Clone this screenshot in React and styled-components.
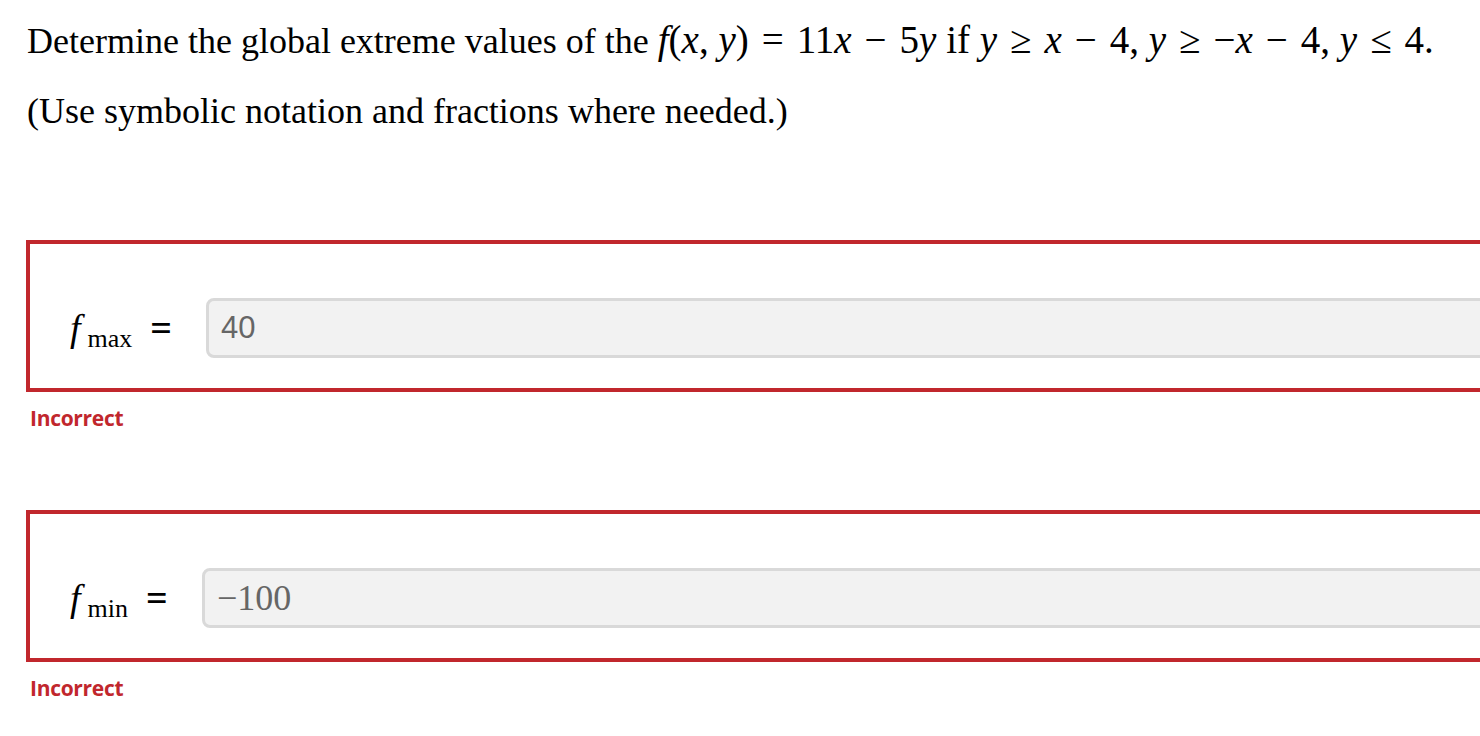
import React from "react";
import styled, { createGlobalStyle } from "styled-components";

const GlobalStyle = createGlobalStyle`
  html, body {
    margin: 0;
    padding: 0;
    background: #ffffff;
    overflow: hidden;
  }
`;

const Page = styled.div`
  width: 1560px;
  padding: 17px 0 0 27px;
  font-family: "Liberation Serif", "Times New Roman", serif;
  color: #000000;
`;

const Prompt = styled.p`
  margin: 0;
  font-size: 36px;
  line-height: 46px;
`;

const Note = styled(Prompt)`
  margin-top: 24px;
`;

const I = styled.i`
  font-style: italic;
`;

const Math = styled.span`
  font-size: 39px;
`;

const Op = styled.span`
  padding: 0 ${(p) => p.$gap || 13}px;
`;

const Answer = styled.div`
  margin-top: ${(p) => p.$top}px;
  margin-left: -1px;
`;

const Field = styled.div`
  display: flex;
  align-items: flex-start;
  border: 4px solid #c1272d;
  padding: 54px 0 0 40px;
  box-sizing: border-box;
  height: 152px;
`;

const Label = styled.div`
  display: flex;
  align-items: baseline;
  width: ${(p) => p.$w}px;
  font-size: 38px;
  line-height: 56px;
  padding-top: 2px;
`;

const Sub = styled.span`
  font-size: 26px;
  margin-left: 7px;
  position: relative;
  top: 6px;
`;

const Equals = styled.span`
  margin-left: ${(p) => p.$gap}px;
  font-size: 38px;
  font-weight: 700;
`;

const Input = styled.div`
  flex: 1;
  height: 54px;
  background: #f2f2f2;
  border: 3px solid #d9d9d9;
  border-radius: 8px;
  display: flex;
  align-items: center;
  padding-left: ${(p) => p.$pad}px;
  color: #666666;
  font-family: ${(p) =>
    p.$serif
      ? `"Liberation Serif", "Times New Roman", serif`
      : `"Liberation Sans", Arial, sans-serif`};
  font-size: ${(p) => (p.$serif ? 36 : 31)}px;
`;

const Feedback = styled.div`
  margin-top: 12px;
  padding-left: 4px;
  font-family: "Open Sans", "Noto Sans", sans-serif;
  font-weight: 700;
  font-size: 21px;
  color: #c1272d;
  letter-spacing: -0.3px;
`;

const App = () => {
  return (
    <>
      <GlobalStyle />
      <Page>
        <Prompt>
          Determine the global extreme values of the{" "}
          <Math>
            <I>f</I>(<I>x</I>, <I>y</I>)
            <Op>=</Op>11<I>x</I>
            <Op>−</Op>5<I>y</I> if <I>y</I>
            <Op>≥</Op>
            <I>x</I>
            <Op>−</Op>4, <I>y</I>
            <Op>≥</Op>−<I>x</I>
            <Op>−</Op>4, <I>y</I>
            <Op>≤</Op>4.
          </Math>
        </Prompt>
        <Note>(Use symbolic notation and fractions where needed.)</Note>

        <Answer $top={106}>
          <Field>
            <Label $w={136}>
              <I>f</I>
              <Sub>max</Sub>
              <Equals $gap={18}>=</Equals>
            </Label>
            <Input $pad={12}>40</Input>
          </Field>
          <Feedback>Incorrect</Feedback>
        </Answer>

        <Answer $top={78}>
          <Field>
            <Label $w={132}>
              <I>f</I>
              <Sub>min</Sub>
              <Equals $gap={18}>=</Equals>
            </Label>
            <Input $pad={12} $serif>
              −100
            </Input>
          </Field>
          <Feedback>Incorrect</Feedback>
        </Answer>
      </Page>
    </>
  );
};

export default App;
